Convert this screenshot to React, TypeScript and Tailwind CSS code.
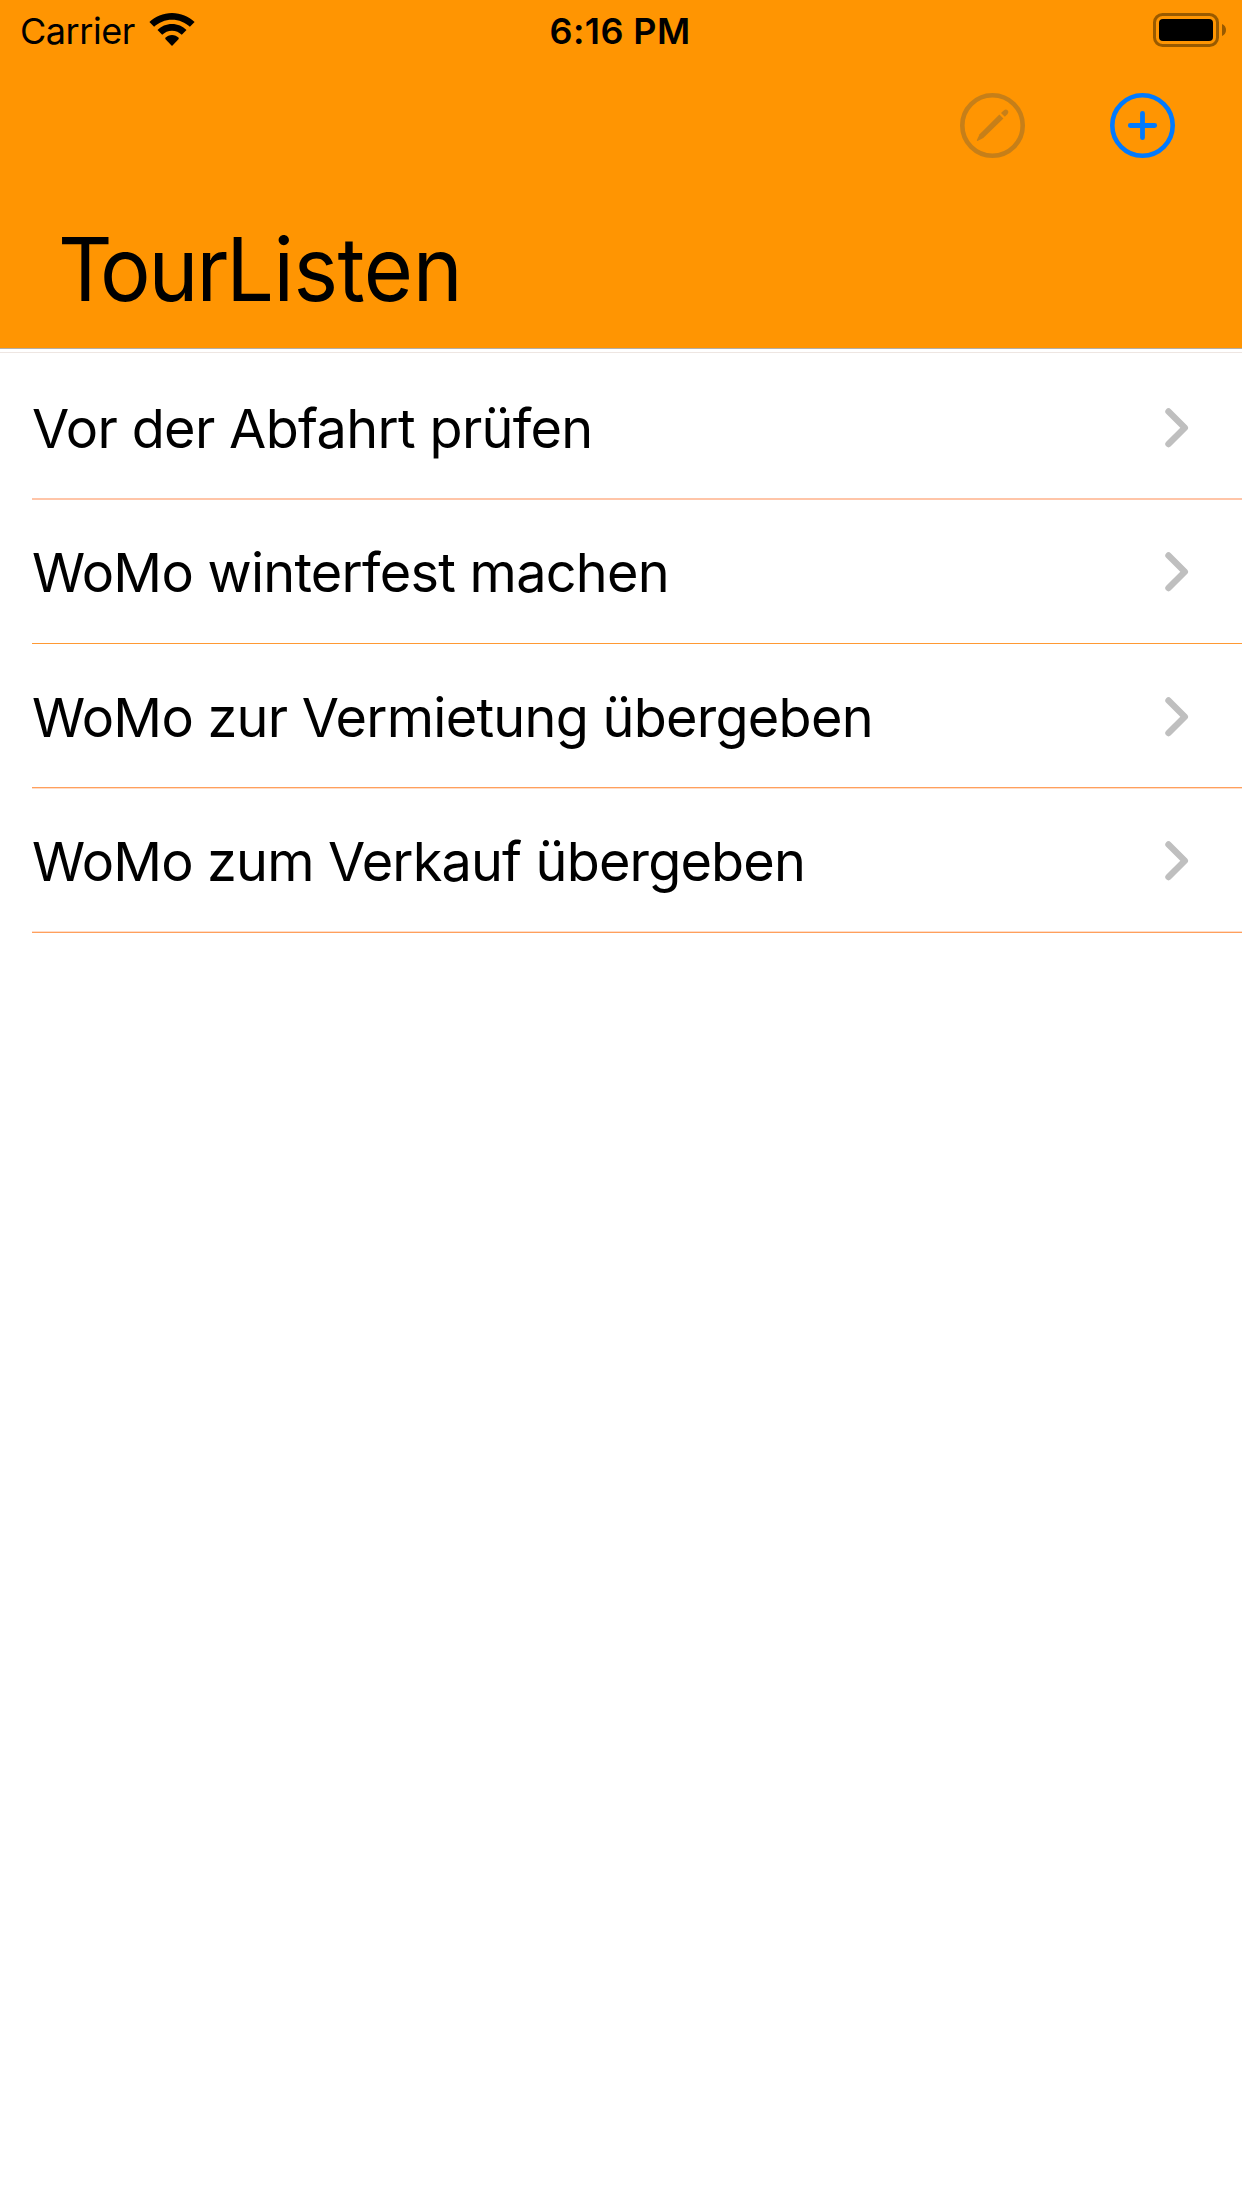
interface TourList {
  id: number;
  name: string;
  rowClass: string;
  textClass: string;
  lineClass: string;
}

const lists: TourList[] = [
  {
    id: 1,
    name: "Vor der Abfahrt prüfen",
    rowClass: "h-[145px]",
    textClass: "tracking-[-0.67px]",
    lineClass: "bg-[#ffc5a8]",
  },
  {
    id: 2,
    name: "WoMo winterfest machen",
    rowClass: "h-[144px]",
    textClass: "tracking-[-0.74px]",
    lineClass: "border-b border-[#ff9933]",
  },
  {
    id: 3,
    name: "WoMo zur Vermietung übergeben",
    rowClass: "h-[145px]",
    textClass: "tracking-[-0.74px]",
    lineClass: "border-t border-[#ffa05c] bg-[#ffdcc8]",
  },
  {
    id: 4,
    name: "WoMo zum Verkauf übergeben",
    rowClass: "h-[144px]",
    textClass: "tracking-[-0.83px]",
    lineClass: "border-b border-[#ffa05c] bg-[#ffdcc8]",
  },
];

function WifiIcon() {
  return (
    <svg width="46" height="34" viewBox="0 0 46 34" className="block">
      <path d="M23 0C31.8 0 39.8 3.5 45.6 9.1L40.9 13.8C36.3 9.4 30 6.7 23 6.7S9.7 9.4 5.1 13.8L.4 9.1C6.2 3.5 14.2 0 23 0Z" />
      <path d="M23 11C28.7 11 33.8 13.3 37.5 17.1L32.8 21.8C30.3 19.3 26.8 17.7 23 17.7S15.7 19.3 13.2 21.8L8.5 17.1C12.2 13.3 17.3 11 23 11Z" />
      <path d="M23 22C25.6 22 28 23.1 29.7 24.8V26L23 33L16.3 26V24.8C18 23.1 20.4 22 23 22Z" />
    </svg>
  );
}

function BatteryIcon() {
  return (
    <svg width="74" height="34" viewBox="0 0 74 34" className="block">
      <rect x="1.5" y="1.5" width="63" height="31" rx="8" fill="none" stroke="#995a00" strokeWidth="3" />
      <rect x="6" y="6" width="54" height="22" rx="4" />
      <path d="M69 11C71.5 12 73 14 73 17S71.5 22 69 23Z" fill="#995a00" />
    </svg>
  );
}

function PencilCircleIcon() {
  return (
    <svg width="66" height="66" viewBox="0 0 66 66" className="block">
      <circle cx="32.5" cy="32.5" r="30.2" fill="none" stroke="#c67f19" strokeWidth="4.6" />
      <path d="M39.4 21.4L43.4 25.4L23.3 45L18 47.8Q16.4 48.6 17 46.8L19.6 41.2Z" fill="#c67f19" />
      <path d="M41 20L44 17.3Q45.8 15.8 47.6 17.3Q49.3 19 47.6 21L44.8 23.8Z" fill="#c67f19" />
    </svg>
  );
}

function PlusCircleIcon() {
  return (
    <svg width="66" height="66" viewBox="0 0 66 66" className="block">
      <circle cx="32.5" cy="32.5" r="30.2" fill="none" stroke="#007aff" strokeWidth="4.6" />
      <path d="M32.5 20.3V44.7M20.3 32.5H44.7" stroke="#007aff" strokeWidth="4.8" strokeLinecap="round" />
    </svg>
  );
}

function Chevron() {
  return (
    <svg width="24" height="40" viewBox="0 0 24 40" className="block">
      <path
        d="M3.5 3.5L19.8 19.7L3.5 36"
        fill="none"
        stroke="#bfbfbf"
        strokeWidth="6.4"
        strokeLinecap="round"
        strokeLinejoin="round"
      />
    </svg>
  );
}

function StatusBar() {
  return (
    <div className="grid h-[60px] grid-cols-3 pr-[15px] pl-5">
      <div className="flex items-start">
        <span className="w-[129px] pt-[10px] text-[36px] leading-[42px] tracking-[-0.45px] whitespace-nowrap">
          Carrier
        </span>
        <div className="pt-[13px]">
          <WifiIcon />
        </div>
      </div>
      <span className="pt-[10px] pr-[7px] text-center text-[36px] leading-[42px] font-semibold tracking-[0.4px] whitespace-nowrap">
        6:16 PM
      </span>
      <div className="flex justify-end pt-[13px]">
        <BatteryIcon />
      </div>
    </div>
  );
}

export default function App() {
  return (
    <div className="min-h-[2208px] w-[1242px] bg-white font-['Inter','Liberation_Sans',sans-serif] text-black">
      <header className="h-[349px] border-b border-[#b3ada6] bg-[#ff9502]">
        <StatusBar />
        <div className="flex justify-end gap-[84px] pt-[33px] pr-[66px]">
          <button>
            <PencilCircleIcon />
          </button>
          <button>
            <PlusCircleIcon />
          </button>
        </div>
        <h1 className="ml-[58px] w-fit origin-left scale-x-[0.96] pt-[57px] text-[88px] leading-[106px] tracking-[-0.5px] whitespace-nowrap">
          <span className="tracking-[-13px]">T</span>
          <span className="tracking-[-2.2px]">our</span>Listen
        </h1>
      </header>

      {/* hairline above the first row */}
      <div className="mt-[3px] h-px bg-[#eee6e2]" />

      <ul className="mt-[2px]">
        {lists.map((list) => (
          <li key={list.id} className={`flex flex-col pl-8 ${list.rowClass}`}>
            <div className="flex flex-1 items-center justify-between pt-[2px] pr-[53px]">
              <span className={`pt-[2px] text-[54px] leading-[64px] whitespace-nowrap ${list.textClass}`}>
                {list.name}
              </span>
              <Chevron />
            </div>
            <div className={`h-[2px] ${list.lineClass}`} />
          </li>
        ))}
      </ul>
    </div>
  );
}
